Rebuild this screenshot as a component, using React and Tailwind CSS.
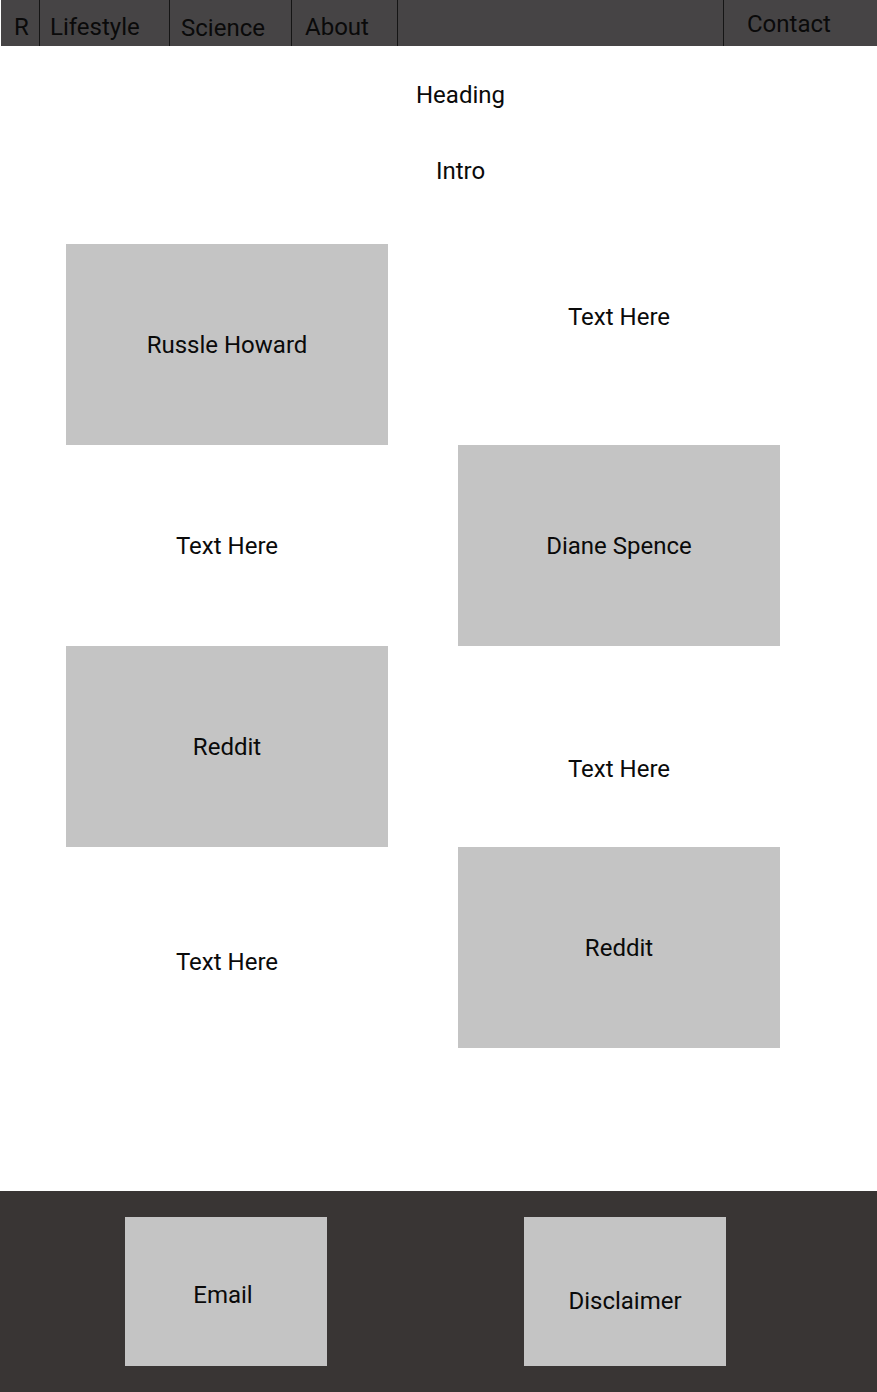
const navItems = [
  { label: "R", cls: "w-[39px] pl-[13px] pt-[13px]" },
  { label: "Lifestyle", cls: "w-[130px] pl-[10px] pt-[13px]" },
  { label: "Science", cls: "w-[122px] pl-[11px] pt-[14px]" },
  { label: "About", cls: "w-[106px] pl-[13px] pt-[13px]" },
];

const cells = [
  { type: "box", label: "Russle Howard" },
  { type: "text", label: "Text Here", cls: "pb-[55px]" },
  { type: "text", label: "Text Here", cls: "" },
  { type: "box", label: "Diane Spence" },
  { type: "box", label: "Reddit" },
  { type: "text", label: "Text Here", cls: "pt-[44px]" },
  { type: "text", label: "Text Here", cls: "pt-[29px]" },
  { type: "box", label: "Reddit" },
];

const App = () => {
  return (
    <div className="w-[877px] min-h-[1392px] bg-white flex flex-col font-['Roboto',sans-serif] text-[24px] text-[#0a0a0a]">
      <nav className="flex h-[46px] bg-[#464445] ml-[1px]">
        {navItems.map((item) => (
          <div key={item.label} className={`${item.cls} h-full border-r border-[#151515] leading-[28px]`}>
            {item.label}
          </div>
        ))}
        <div className="flex-1 border-r border-[#151515]" />
        <div className="w-[153px] pl-[23px] pt-[10px] leading-[28px]">Contact</div>
      </nav>

      <main className="flex-1 flex flex-col">
        <h1 className="text-center pl-[44px] mt-[35px] leading-[28px]">Heading</h1>
        <p className="text-center pl-[44px] mt-[48px] leading-[28px]">Intro</p>

        <div className="grid grid-cols-[322px_322px] gap-x-[70px] auto-rows-[201px] ml-[66px] mt-[59px]">
          {cells.map((cell, index) =>
            cell.type === "box" ? (
              <div key={index} className="bg-[#c4c4c4] flex items-center justify-center">
                {cell.label}
              </div>
            ) : (
              <div key={index} className={`flex items-center justify-center ${cell.cls}`}>
                {cell.label}
              </div>
            )
          )}
        </div>
      </main>

      <footer className="h-[201px] bg-[#393534] flex pt-[26px] mt-auto">
        <div className="ml-[125px] w-[202px] h-[149px] bg-[#c4c4c4] flex items-center justify-center pt-[6px] pr-[6px]">
          Email
        </div>
        <div className="ml-[197px] w-[202px] h-[149px] bg-[#c4c4c4] flex items-center justify-center pt-[18px]">
          Disclaimer
        </div>
      </footer>
    </div>
  );
};

export default App;
